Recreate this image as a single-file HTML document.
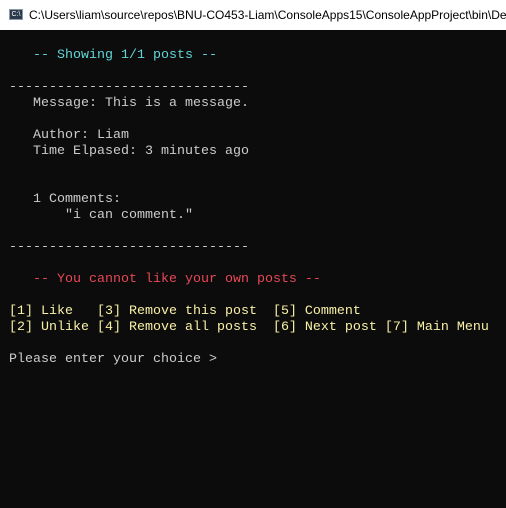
<html><head><style>
body{margin:0;width:506px;height:508px;background:#0c0c0c;overflow:hidden;position:relative}
.t{position:absolute;left:0;top:0;width:506px;height:30px;background:#fff;font:12px "Liberation Sans",sans-serif;color:#000}
.t span{position:absolute;left:29px;top:8px;white-space:nowrap}
.ic{position:absolute;left:9px;top:9px;width:14px;height:11px;background:#2a3a4a;border:1px solid #8a9aaa;box-sizing:border-box;color:#fff;font:7px "Liberation Sans";line-height:9px;text-align:center}
pre{position:absolute;left:9px;top:32px;margin:0;font:13.33px/16px "Liberation Mono",monospace;color:#cccccc}
.c{color:#61d6d6}.y{color:#f9f1a5}.r{color:#e74856}
</style></head><body>
<div class="t"><div class="ic">C:\</div><span>C:\Users\liam\source\repos\BNU-CO453-Liam\ConsoleApps15\ConsoleAppProject\bin\De</span></div>
<pre>

<span class="c">   -- Showing 1/1 posts --</span>

------------------------------
   Message: This is a message.

   Author: Liam
   Time Elpased: 3 minutes ago


   1 Comments:
       "i can comment."

------------------------------

<span class="r">   -- You cannot like your own posts --</span>

<span class="y">[1] Like   [3] Remove this post  [5] Comment
[2] Unlike [4] Remove all posts  [6] Next post [7] Main Menu</span>

Please enter your choice &gt;
</pre>
</body></html>
